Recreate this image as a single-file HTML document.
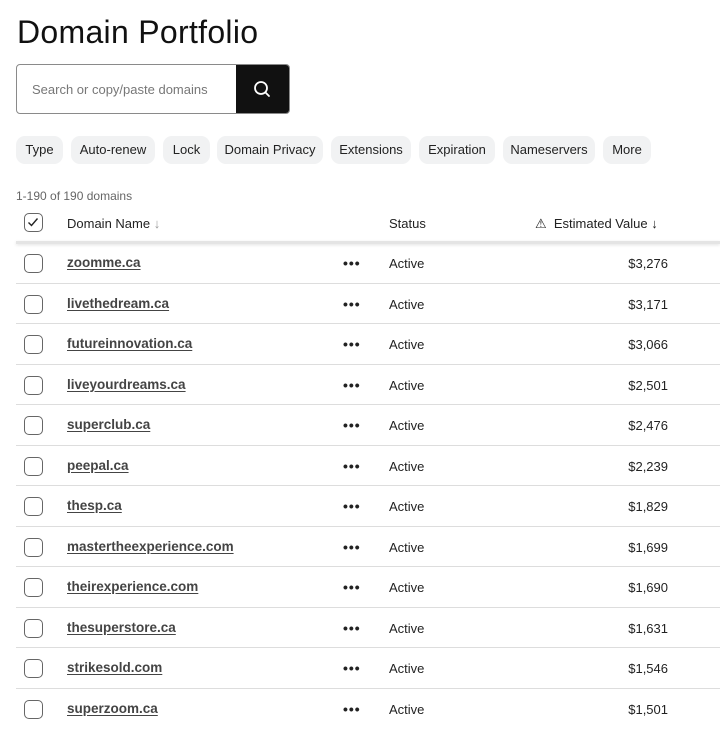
<!DOCTYPE html>
<html><head><meta charset="utf-8"><style>
*{margin:0;padding:0;box-sizing:border-box}
body{width:720px;height:717px;overflow:hidden;background:#fff;font-family:"Liberation Sans",sans-serif;color:#111;position:relative}
.a{position:absolute}
h1{position:absolute;left:17px;top:14px;font-size:32px;font-weight:400;letter-spacing:0.3px;color:#111}
.search{left:16px;top:64px;width:274px;height:50px;border:1px solid #8a8a8a;border-radius:4px;overflow:hidden}
.search span{position:absolute;left:15px;top:17px;font-size:13px;color:#777}
.search .btn{position:absolute;right:0;top:0;width:53px;height:48px;background:#111}
.chip{position:absolute;top:136px;height:28px;background:#f1f2f3;border-radius:9px;font-size:13px;line-height:28px;text-align:center;color:#222}
.cnt{left:16px;top:189px;font-size:12px;color:#666}
.cb{position:absolute;left:24px;width:19px;height:19px;border:1.5px solid #666;border-radius:5px;background:#fff}
.row{position:absolute;left:0;width:720px;height:40.5px}
.row .cb{top:11px}
.dn{position:absolute;left:67px;top:12px;font-size:13.5px;font-weight:700;color:#444;text-decoration:underline;text-underline-offset:2px}
.dots{position:absolute;left:343px;top:12px;font-size:14px;font-weight:700;color:#222;letter-spacing:1px}
.st{position:absolute;left:389px;top:13px;font-size:13px;color:#222}
.val{position:absolute;right:52px;top:13px;font-size:13px;color:#222}
.line{position:absolute;left:16px;right:0;bottom:0;height:1px;background:#ddd}
.hd{font-size:13px;color:#222;top:216px}
</style></head><body>
<h1>Domain Portfolio</h1>
<div class="a search"><span>Search or copy/paste domains</span><div class="btn">
<svg width="53" height="48" viewBox="0 0 53 48"><circle cx="25" cy="23" r="6" fill="none" stroke="#fff" stroke-width="1.8"/><line x1="29.5" y1="27.5" x2="33" y2="31" stroke="#fff" stroke-width="1.8" stroke-linecap="round"/></svg></div></div>
<div class="chip" style="left:16px;width:47px">Type</div>
<div class="chip" style="left:71px;width:84px">Auto-renew</div>
<div class="chip" style="left:163px;width:47px">Lock</div>
<div class="chip" style="left:217px;width:106px">Domain Privacy</div>
<div class="chip" style="left:331px;width:80px">Extensions</div>
<div class="chip" style="left:419px;width:76px">Expiration</div>
<div class="chip" style="left:503px;width:92px">Nameservers</div>
<div class="chip" style="left:603px;width:48px">More</div>
<div class="a cnt">1-190 of 190 domains</div>
<div class="cb" style="top:213px"><svg width="16" height="16" viewBox="0 0 16 16" style="position:absolute;left:0;top:0"><path d="M3.5 8.5l3 3 6-7" fill="none" stroke="#222" stroke-width="1.4"/></svg></div>
<div class="a hd" style="left:67px">Domain Name <span style="color:#999">↓</span></div>
<div class="a hd" style="left:389px">Status</div>
<div class="a hd" style="left:535px">⚠&nbsp; Estimated Value ↓</div>
<div class="a" style="left:16px;right:0;top:241px;height:3px;background:#e4e4e4;box-shadow:0 1px 3px rgba(0,0,0,.12)"></div>
<div class="row" style="top:243px"><div class="cb"></div><div class="dn">zoomme.ca</div><div class="dots">•••</div><div class="st">Active</div><div class="val">$3,276</div><div class="line"></div></div>
<div class="row" style="top:283.5px"><div class="cb"></div><div class="dn">livethedream.ca</div><div class="dots">•••</div><div class="st">Active</div><div class="val">$3,171</div><div class="line"></div></div>
<div class="row" style="top:324px"><div class="cb"></div><div class="dn">futureinnovation.ca</div><div class="dots">•••</div><div class="st">Active</div><div class="val">$3,066</div><div class="line"></div></div>
<div class="row" style="top:364.5px"><div class="cb"></div><div class="dn">liveyourdreams.ca</div><div class="dots">•••</div><div class="st">Active</div><div class="val">$2,501</div><div class="line"></div></div>
<div class="row" style="top:405px"><div class="cb"></div><div class="dn">superclub.ca</div><div class="dots">•••</div><div class="st">Active</div><div class="val">$2,476</div><div class="line"></div></div>
<div class="row" style="top:445.5px"><div class="cb"></div><div class="dn">peepal.ca</div><div class="dots">•••</div><div class="st">Active</div><div class="val">$2,239</div><div class="line"></div></div>
<div class="row" style="top:486px"><div class="cb"></div><div class="dn">thesp.ca</div><div class="dots">•••</div><div class="st">Active</div><div class="val">$1,829</div><div class="line"></div></div>
<div class="row" style="top:526.5px"><div class="cb"></div><div class="dn">mastertheexperience.com</div><div class="dots">•••</div><div class="st">Active</div><div class="val">$1,699</div><div class="line"></div></div>
<div class="row" style="top:567px"><div class="cb"></div><div class="dn">theirexperience.com</div><div class="dots">•••</div><div class="st">Active</div><div class="val">$1,690</div><div class="line"></div></div>
<div class="row" style="top:607.5px"><div class="cb"></div><div class="dn">thesuperstore.ca</div><div class="dots">•••</div><div class="st">Active</div><div class="val">$1,631</div><div class="line"></div></div>
<div class="row" style="top:648px"><div class="cb"></div><div class="dn">strikesold.com</div><div class="dots">•••</div><div class="st">Active</div><div class="val">$1,546</div><div class="line"></div></div>
<div class="row" style="top:688.5px"><div class="cb"></div><div class="dn">superzoom.ca</div><div class="dots">•••</div><div class="st">Active</div><div class="val">$1,501</div></div>
</body></html>
